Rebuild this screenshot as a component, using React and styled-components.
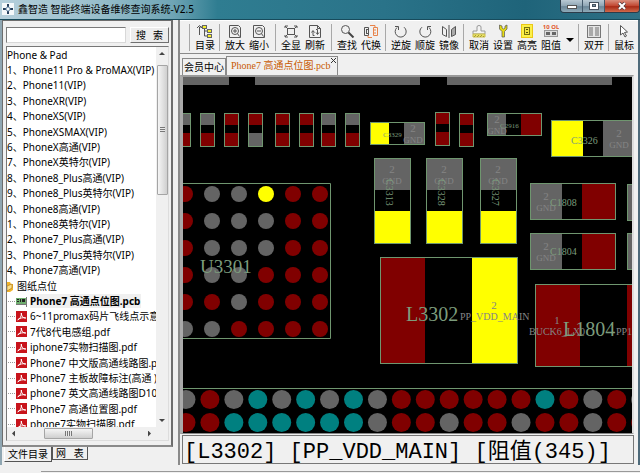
import { useState } from 'react'
import styled, { createGlobalStyle, css } from 'styled-components'

const GlobalStyle = createGlobalStyle`
  * {
    box-sizing: border-box;
  }

  body {
    margin: 0;
    font-family: 'Noto Sans', 'Noto Sans CJK SC', sans-serif;
    font-size: 10px;
    color: #000;
  }

  button,
  input {
    font: inherit;
    color: inherit;
    margin: 0;
    padding: 0;
  }
`

const MODELS = [
  '1、Phone11 Pro & ProMAX(VIP)',
  '2、Phone11(VIP)',
  '3、PhoneXR(VIP)',
  '4、PhoneXS(VIP)',
  '5、PhoneXSMAX(VIP)',
  '6、PhoneX高通(VIP)',
  '7、PhoneX英特尔(VIP)',
  '8、Phone8_Plus高通(VIP)',
  '9、Phone8_Plus英特尔(VIP)',
  '0、Phone8高通(VIP)',
  '1、Phone8英特尔(VIP)',
  '2、Phone7_Plus高通(VIP)',
  '3、Phone7_Plus英特尔(VIP)',
  '4、Phone7高通(VIP)'
]

const FILES = [
  'Phone7 高通点位图.pcb',
  '6~11promax码片飞线点示意图.pdf',
  '7代8代电感组.pdf',
  'iphone7实物扫描图.pdf',
  'Phone7 中文版高通线路图.pdf',
  'Phone7 主板故障标注(高通 ) .pdf',
  'phone7 英文高通线路图D10 (高通).pdf',
  'Phone7 高通位置图.pdf',
  'phone7实物扫描图.pdf'
]

/* ---------- icons ---------- */

const LINE = { fill: 'none', stroke: '#555', strokeWidth: 1 }

const ICONS = {
  目录: (
    <>
      <path d="M2.500 3v8M7.500 3v9M7.500 7h3M7.500 12h3M2.500 3h3" {...LINE} />
      <path d="M0 4l2.500-2.500L5 4" {...LINE} />
      <rect x="5.500" y="1.500" width="4" height="3" fill="#f5ee2a" stroke="#666" />
      <rect x="10.500" y="5.500" width="4" height="3" fill="#f5ee2a" stroke="#666" />
      <rect x="10.500" y="10.500" width="4" height="3" fill="#f5ee2a" stroke="#666" />
    </>
  ),
  放大: (
    <>
      <path d="M2.500 1.500h9l2 2v10h-11z" {...LINE} />
      <circle cx="8" cy="7" r="3.500" {...LINE} />
      <path d="M6 7h4M8 5v4M10.500 9.500l2 3" {...LINE} />
    </>
  ),
  缩小: (
    <>
      <path d="M2.500 1.500h9l2 2v10h-11z" {...LINE} />
      <circle cx="8" cy="7" r="3.500" {...LINE} />
      <path d="M6 7h4M10.500 9.500l2 3" {...LINE} />
    </>
  ),
  全显: (
    <>
      <rect x="4.500" y="4.500" width="7" height="6" {...LINE} />
      <path d="M2 4V2h3M11 2h3v2M14 11v2h-3M5 13H2v-2M2 2l3 3M14 2l-3 3M14 13l-3-3M2 13l3-3" {...LINE} />
    </>
  ),
  刷新: (
    <>
      <path d="M2.500 1.500h8l3 3v9h-11zM10.500 1.500v3h3" {...LINE} />
      <path d="M7.500 11.500H6V7M4.500 8.500L6 6.500l1.500 2M9 5.500h1.500V10M9 8.500l1.500 2 1.500-2" {...LINE} />
    </>
  ),
  查找: (
    <>
      <circle cx="6.500" cy="5.500" r="4" {...LINE} />
      <path d="M9.500 8.500l5 5" stroke="#444" strokeWidth="2" fill="none" />
    </>
  ),
  代换: (
    <>
      <path d="M1.500 3.500h4v8h-4zM3 5.500h2M3 9.500h2M3.500 5v5" {...LINE} />
      <path d="M10.500 3.500h4v8h-4zM11 6h2M11 9h2M7 1.500h5v2M9 13.500H5v-2" {...LINE} stroke="#e8834a" />
    </>
  ),
  逆旋: (
    <>
      <path d="M4 3.500A5.500 5.500 0 1 0 11 3.200" {...LINE} />
      <path d="M2 2.500h3.500V6" {...LINE} />
    </>
  ),
  顺旋: (
    <>
      <path d="M12 3.500A5.500 5.500 0 1 1 5 3.200" {...LINE} />
      <path d="M14 2.500h-3.500V6" {...LINE} />
    </>
  ),
  镜像: (
    <>
      <path d="M1.500 2.500l4 3v7l-4-2z" {...LINE} />
      <path d="M8 1v13" {...LINE} />
      <path d="M14.500 2.500l-4 3v7l4-2z" fill="#aaa" stroke="#555" />
    </>
  ),
  取消: (
    <>
      <path d="M6 7V3q0-1.500 2-1.500T10 3v4h4v3H2V7z" fill="#f4f4f4" stroke="#999" />
      <path d="M2 10h12v3H2z" fill="#e9e26b" stroke="#c9bd4a" />
      <path d="M3 13l2-2M6 13l2-2M9 13l2-2M12 13l1-1" stroke="#a89c30" fill="none" />
    </>
  ),
  设置: (
    <path
      d="M4.500 1v4L7 7.500V13h2.500V7.500L12 5V1l-2 1v2L8.500 5 7 4V2z"
      fill="#e8dc12"
      stroke="#555"
      strokeWidth="0.700"
    />
  ),
  高亮: (
    <>
      <rect x="2.500" y="0.500" width="11" height="13" fill="#fbf04a" stroke="#eac816" />
      <rect x="5.500" y="3.500" width="5" height="7" fill="#f3e53c" stroke="#77700f" />
      <path d="M7 5.500h2M7 8.500h2" stroke="#55500a" />
    </>
  ),
  阻值: (
    <>
      <text x="8" y="5" fontSize="6" fontWeight="700" textAnchor="middle" fill="#e2572b">10 OL</text>
      <rect x="1.500" y="6.500" width="13" height="6" fill="#ddd" stroke="#999" />
      <path d="M3 8h4v3H3zM9 8h4v3H9z" fill="#666" />
    </>
  ),
  双开: (
    <>
      <rect x="1.500" y="1.500" width="13" height="12" fill="#e4e4e4" stroke="#777" />
      <path d="M3 3h4v9H3zM9 3h4v9H9z" fill="#a9a9a9" />
    </>
  ),
  鼠标: <path d="M4.500 1.500v9.500l2.500-2 2 4 1.500-1-2-3.500 3-.5z" fill="#fff" stroke="#555" />
}

const TOOL_GROUPS = [
  { items: ['目录'] },
  { items: ['放大', '缩小'], wide: true },
  { items: ['全显', '刷新'], wide: true },
  { items: ['查找', '代换'] },
  { items: ['逆旋', '顺旋', '镜像'] },
  { items: ['取消', '设置', '高亮', '阻值'], more: true },
  { items: ['双开'] },
  { items: ['鼠标'] }
]

const PdfIcon = () => (
  <svg width="11" height="11" viewBox="0 0 11 11">
    <rect width="11" height="11" fill="#c8141c" />
    <path d="M1.500 9C4 8 5.800 5 5.300 2M5.300 2C5.300 5 7 7.300 9.800 7M2 8.500C4 7 7 6.300 9.800 7" fill="none" stroke="#fff" />
  </svg>
)

const PcbIcon = () => (
  <svg width="11" height="11" viewBox="0 0 11 11">
    <rect x="0" y="2" width="10" height="6" fill="#6fae6f" />
    <path d="M1 3h2v1H1zM1 5h2v1H1zM4 3h1v3H4zM6 3h3v3H6z" fill="#222" />
    <path d="M0 8.500h10M10.500 1v10" stroke="#777" />
  </svg>
)

const FolderIcon = () => (
  <svg width="7" height="12" viewBox="0 0 7 12">
    <path d="M0 2h3l1 2h2v6l-3 2H0z" fill="#f0b429" />
    <path d="M0 6l5-2v4l-5 3z" fill="#fbe08a" stroke="#a8701a" strokeWidth="0.600" />
  </svg>
)

/* ---------- board drawing ---------- */

const C = {
  r: '#800000',
  g: '#646464',
  t: '#008080',
  y: '#ffff00',
  line: '#6f966f',
  name: '#7c9c7c',
  net: '#858585'
}

const RESISTORS = [
  [-7, 36, 'gr'], [17, 36, 'gr'], [41, 36, 'rr'], [65, 36, 'rg'], [92, 36, 'rr'], [116, 36, 'rr'],
  [138, 36, 'gr'], [162, 36, 'gr'], [252, 35, 'rr'], [276, 36, 'rr']
]

// x, y, w, h, first pad size, gap, pad colours
const WIDE_PARTS = [
  [187, 45, 54, 22, 19, 15, 'yg'],
  [304, 36, 54, 22, 19, 15, 'gr'],
  [368, 43, 86, 36, 32, 20, 'yg'],
  [347, 106, 85, 36, 32, 20, 'gr'],
  [347, 156, 85, 36, 32, 20, 'gr'],
  [444, 107, 85, 36, 32, 20, 'gr'],
  [444, 156, 85, 36, 32, 20, 'gr'],
  [197, 180, 137, 106, 45, 47, 'ry'],
  [352, 207, 137, 82, 45, 47, 'rr']
]

const TALL_PARTS = [
  [191, 'C3313'],
  [243, 'C3328'],
  [297, 'C3327']
]

const GRID = ['rggyrr', 'rgggrr', 'rgggrr', 'rggrrr', 'rrgrrr', 'ggrrrr']
const STRIP = ['grgtgtgtgrrrrrrtrgrg', 'rrttttttgrrgrrgrrgrr']

const Ground = ({ x, y }) => (
  <>
    <Mark x={x} y={y} $size={11} $fill={C.net} textAnchor="middle">2</Mark>
    <Mark x={x} y={y + 11} $size={9} $fill={C.net} textAnchor="middle">GND</Mark>
  </>
)

function Board() {
  return (
    <Canvas role="img" aria-label="Phone7 高通点位图">
      <g fill={C.g}>
        <rect x="0" y="0" width="46" height="8" />
        <rect x="72" y="0" width="165" height="8" />
        <rect x="264" y="0" width="165" height="8" />
      </g>

      {RESISTORS.map(([x, y, pads]) => (
        <g key={x}>
          <rect x={x} y={y} width="15" height="12" fill={C[pads[0]]} />
          <rect x={x} y={y + 20} width="15" height="13" fill={C[pads[1]]} />
          <rect x={x + 0.5} y={y + 0.5} width="14" height="33" fill="none" stroke={C.line} />
        </g>
      ))}

      {WIDE_PARTS.map(([x, y, w, h, pad, gap, pads]) => (
        <g key={`${x}-${y}`}>
          <rect x={x} y={y} width={pad} height={h} fill={C[pads[0]]} />
          <rect x={x + pad + gap} y={y} width={w - pad - gap} height={h} fill={C[pads[1]]} />
          <rect x={x + 0.5} y={y + 0.5} width={w} height={h} fill="none" stroke={C.line} />
        </g>
      ))}

      {TALL_PARTS.map(([x, name]) => (
        <g key={name}>
          <rect x={x} y="81" width="36" height="32" fill={C.g} />
          <rect x={x} y="134" width="36" height="33" fill={C.y} />
          <rect x={x + 0.5} y="81.5" width="36" height="85" fill="none" stroke={C.line} />
          <Ground x={x + 18} y={96} />
          <Mark transform={`translate(${x + 12} 102) rotate(90)`} $size={10}>{name}</Mark>
        </g>
      ))}

      <path d="M0 106.500H147.500V261.500H0M0 311.500H3000" fill="none" stroke={C.line} />
      {GRID.map((row, j) =>
        [...row].map((c, i) => <circle key={`${i}-${j}`} cx={2 + i * 27} cy={117 + j * 27} r="8" fill={C[c]} />)
      )}
      {STRIP.map((row, j) =>
        [...row].map((c, i) => (
          <circle key={`${i}-${j}`} cx={3 + i * 23.93} cy={322.5 + j * 23} r="9.500" fill={C[c]} />
        ))
      )}

      <Ground x={230} y={55} />
      <Ground x={314} y={46} />
      <Ground x={436} y={60} />
      <Ground x={363} y={123} />
      <Ground x={363} y={173} />

      <Mark x="200" y="60" $size={7}>C3329</Mark>
      <Mark x="317" y="51" $size={7}>C2916</Mark>
      <Mark x="388" y="67" $size={10}>C3326</Mark>
      <Mark x="367" y="129" $size={10}>C1808</Mark>
      <Mark x="367" y="178" $size={10}>C1804</Mark>
      <Mark x="17" y="196" $size={19}>U3301</Mark>
      <Mark x="223" y="244" $size={20}>L3302</Mark>
      <Mark x="311" y="232" $size={11} $fill={C.net} textAnchor="middle">2</Mark>
      <Mark x="277" y="243" $size={10} $fill={C.net}>PP_VDD_MAIN</Mark>
      <Mark x="374" y="247" $size={11} $fill={C.net} textAnchor="middle">1</Mark>
      <Mark x="346" y="258" $size={10} $fill={C.net}>BUCK6_LX0</Mark>
      <Mark x="380" y="259" $size={20}>L1804</Mark>
      <Mark x="433" y="258" $size={10} $fill={C.net}>PP1</Mark>
    </Canvas>
  )
}

/* ---------- window ---------- */

export default function App() {
  const [keyword, setKeyword] = useState('')
  const [selected, setSelected] = useState(FILES[0])

  return (
    <Shell>
      <GlobalStyle />
      <TitleBar>
        <svg width="12" height="12" viewBox="0 0 12 12">
          <rect width="12" height="12" fill="#f4f8fa" />
          <path d="M6 1v3M6 8v3M1 6h3M8 6h3" stroke="#27415e" strokeWidth="2" />
          <circle cx="6" cy="6" r="2" fill="none" stroke="#6d8ba8" />
        </svg>
        <Title>鑫智造 智能终端设备维修查询系统-V2.5</Title>
        <Controls>
          <WinButton aria-label="最小化">
            <svg width="10" height="8"><rect x="0.500" y="3.500" width="9" height="3" fill="#fff" stroke="#555" /></svg>
          </WinButton>
          <WinButton aria-label="还原">
            <svg width="10" height="8">
              <rect x="0.500" y="0.500" width="9" height="7" fill="#fff" stroke="#46525e" />
              <rect x="3.500" y="2.500" width="3" height="2" fill="#7d95a4" stroke="#46525e" />
            </svg>
          </WinButton>
          <WinButton $close aria-label="关闭">
            <svg width="10" height="8">
              <path d="M2 1l6 6M8 1L2 7" stroke="#53383a" strokeWidth="3.500" />
              <path d="M2 1l6 6M8 1L2 7" stroke="#fff" strokeWidth="2" />
            </svg>
          </WinButton>
        </Controls>
      </TitleBar>

      <Body>
        <Sidebar>
          <SidebarFrame>
            <Search onSubmit={e => e.preventDefault()}>
              <SearchInput aria-label="搜索" value={keyword} onChange={e => setKeyword(e.target.value)} />
              <SearchButton type="submit">
                <span>搜</span>
                <span>索</span>
              </SearchButton>
            </Search>
            <TreeBox>
              <TreeView>
                <Tree>
                  <TreeRow>
                    <RowButton>Phone &amp; Pad</RowButton>
                  </TreeRow>
                  {MODELS.map(name => (
                    <TreeRow key={name}>
                      <RowButton>{name}</RowButton>
                    </TreeRow>
                  ))}
                  <TreeRow>
                    <FolderIcon />
                    <RowButton $indent>图纸点位</RowButton>
                  </TreeRow>
                  {FILES.map(name => (
                    <TreeRow key={name} $leaf>
                      {name.endsWith('.pcb') ? <PcbIcon /> : <PdfIcon />}
                      <RowButton $selected={selected === name} onClick={() => setSelected(name)}>
                        {name}
                      </RowButton>
                    </TreeRow>
                  ))}
                </Tree>
              </TreeView>
              <VScroll>
                <Arrow $dir="up" />
                <VThumb />
                <Arrow $dir="down" />
              </VScroll>
              <HScroll>
                <Arrow $dir="left" />
                <HThumb />
                <Arrow $dir="right" />
              </HScroll>
            </TreeBox>
          </SidebarFrame>
          <SideTabs>
            <SideTab $active>文件目录</SideTab>
            <SideTab>网&nbsp;&nbsp;&nbsp;表</SideTab>
          </SideTabs>
        </Sidebar>

        <Main>
          <Toolbar>
            {TOOL_GROUPS.map(group => (
              <ToolGroup key={group.items[0]} $wide={group.wide}>
                {group.items.map(label => (
                  <Tool key={label}>
                    <svg width="16" height="14" viewBox="0 0 16 14">{ICONS[label]}</svg>
                    {label}
                  </Tool>
                ))}
                {group.more && (
                  <More aria-label="更多">
                    <svg width="8" height="4"><path d="M0 0h8L4 4z" /></svg>
                  </More>
                )}
              </ToolGroup>
            ))}
          </Toolbar>

          <DocTabs>
            <DocTab>会员中心</DocTab>
            <DocTab $active>
              Phone7 高通点位图.pcb
              <svg width="5" height="5"><path d="M0 0l5 5M5 0L0 5" stroke="#333" /></svg>
            </DocTab>
          </DocTabs>

          <Viewport>
            <Board />
          </Viewport>
          <Status>
            [L3302] [PP_VDD_MAIN] [<span>阻值</span>(345)]
          </Status>
        </Main>
      </Body>
      <Footer />
    </Shell>
  )
}

const Shell = styled.div`
  height: 100vh;
  display: grid;
  grid-template-rows: 20px minmax(0, 1fr) 8px;
  background: #f0f0f0;
  overflow: hidden;
`

const TitleBar = styled.header`
  display: flex;
  align-items: flex-start;
  gap: 4px;
  padding: 3px 0 0 2px;
  border-bottom: 1px solid #174b5c;
  background: linear-gradient(90deg, #b5cfdb 0%, #9cc0cd 14%, #6fa5b5 27%, #2f7d91 34%, #2a7389 60%, #1f647a 82%, #2f7186 100%);

  & > svg {
    flex: none;
  }
`

const Title = styled.h1`
  flex: 1;
  margin: 0;
  font-size: 10px;
  line-height: 12px;
  font-weight: 400;
  white-space: nowrap;
`

const Controls = styled.div`
  display: flex;
  height: 13px;
  margin-top: -3px;
  border: 1px solid #2c3c4a;
  border-top: 0;
  border-radius: 0 0 4px 4px;
  overflow: hidden;
`

const WinButton = styled.button`
  display: flex;
  align-items: center;
  justify-content: center;
  width: ${p => (p.$close ? 34 : 22)}px;
  border: 0;
  border-right: ${p => (p.$close ? 0 : '1px solid #42586a')};
  background: ${p =>
    p.$close
      ? 'linear-gradient(#d98d7c, #c1452f 50%, #a92a16 55%, #cf6a4c)'
      : 'linear-gradient(#b9c9d3, #8ea5b4 50%, #6c8798 55%, #8fabb9)'};
`

const Body = styled.div`
  display: grid;
  grid-template-columns: 180px minmax(0, 1fr);
  min-height: 0;
`

const Sidebar = styled.aside`
  display: flex;
  flex-direction: column;
  min-height: 0;
  padding-right: 5px;
  border-left: 2px solid #8fa6b2;
  border-right: 2px solid #8a8a8a;
`

const SidebarFrame = styled.div`
  flex: 1;
  min-height: 0;
  display: flex;
  flex-direction: column;
  gap: 3px;
  padding: 6px 2px 4px 3px;
  border: 1px solid #6d6d6d;
  border-right: 2px solid #6d6d6d;
  border-bottom: 2px solid #8a8a8a;
`

const Search = styled.form`
  display: flex;
  gap: 4px;
  height: 16px;
`

const SearchInput = styled.input`
  flex: 1;
  min-width: 0;
  border: 1px solid #7a7a7a;
  border-right-color: #d8d8d8;
  border-bottom-color: #d8d8d8;
  background: #fff;
  outline: none;
`

const SearchButton = styled.button`
  display: flex;
  align-items: center;
  justify-content: space-between;
  width: 39px;
  padding: 0 5px;
  border: 1px solid #fff;
  border-right-color: #707070;
  border-bottom-color: #707070;
  background: #ececec;
  line-height: 12px;
`

const TreeBox = styled.div`
  flex: 1;
  min-height: 0;
  display: grid;
  grid-template: minmax(0, 1fr) 13px / minmax(0, 1fr) 12px;
  border: 1px solid #777;
  border-right-color: #ddd;
  border-bottom-color: #ddd;
  background: #f0f0f0;
`

const TreeView = styled.div`
  background: #fff;
  overflow: hidden;
`

const Tree = styled.ul`
  display: grid;
  grid-auto-rows: minmax(0, 1fr);
  height: calc(100% + 5px);
  margin: 0;
  padding: 0;
  list-style: none;
`

const TreeRow = styled.li`
  display: flex;
  align-items: center;
  min-width: 0;

  svg {
    flex: none;
  }

  ${p =>
    p.$leaf &&
    css`
      &::before {
        content: '';
        flex: none;
        width: 7px;
        margin: 0 1px;
        border-top: 1px dotted #999;
      }

      svg {
        margin-right: 3px;
      }
    `}
`

const RowButton = styled.button`
  padding: 0 1px 0 ${p => (p.$indent ? 3 : 0)}px;
  border: 0;
  background: ${p => (p.$selected ? '#f0f0f0' : 'transparent')};
  font-weight: ${p => (p.$selected ? 700 : 400)};
  line-height: 14px;
  white-space: nowrap;
`

const VScroll = styled.div`
  display: flex;
  flex-direction: column;
  align-items: center;
  justify-content: space-between;
  padding: 5px 0;
`

const VThumb = styled.div`
  width: 11px;
  height: 35%;
  margin-bottom: auto;
  margin-top: 10px;
  border: 1px solid #a5a5a5;
  border-radius: 1px;
  background: repeating-linear-gradient(#777 0 1px, #e8e8e8 1px 2px) center / 5px 5px no-repeat,
    linear-gradient(90deg, #f5f5f5, #cfcfcf);
`

const HScroll = styled.div`
  display: flex;
  align-items: center;
  padding: 0 5px;
`

const HThumb = styled.div`
  width: 49px;
  height: 11px;
  margin-left: 29px;
  margin-right: auto;
  border: 1px solid #a5a5a5;
  border-radius: 1px;
  background: repeating-linear-gradient(90deg, #777 0 1px, #e8e8e8 1px 2px) center / 7px 5px no-repeat,
    linear-gradient(#f5f5f5, #cfcfcf);
`

const ARROWS = {
  up: '50% 0, 100% 100%, 0 100%',
  down: '0 0, 100% 0, 50% 100%',
  left: '0 50%, 100% 0, 100% 100%',
  right: '0 0, 100% 50%, 0 100%'
}

const Arrow = styled.i`
  width: ${p => (p.$dir === 'up' || p.$dir === 'down' ? 6 : 3)}px;
  height: ${p => (p.$dir === 'up' || p.$dir === 'down' ? 3 : 6)}px;
  background: #444;
  clip-path: polygon(${p => ARROWS[p.$dir]});
`

const SideTabs = styled.div`
  display: flex;
  align-items: flex-start;
  height: 18px;
  padding-left: 2px;
`

const SideTab = styled.button`
  height: ${p => (p.$active ? 15 : 13)}px;
  padding: 0 3px;
  border: 1px solid #555;
  border-top: 0;
  border-left-color: ${p => (p.$active ? '#fff' : '#555')};
  background: #f0f0f0;
  line-height: 12px;
`

const Main = styled.main`
  display: flex;
  flex-direction: column;
  min-width: 0;
  min-height: 0;
  border-right: 2px solid #4e6a7a;
`

const Toolbar = styled.div`
  display: flex;
  height: 34px;
  padding: 3px 0 2px 9px;
  border-top: 1px solid #fff;
  border-bottom: 1px solid #8a8a8a;
`

const ToolGroup = styled.div`
  display: flex;
  flex: none;
  padding: 0 ${p => (p.$wide ? 4 : 2)}px 0 3px;
  border-left: 1px solid #a8a8a8;
`

const Tool = styled.button`
  display: flex;
  flex-direction: column;
  align-items: center;
  width: 24px;
  border: 0;
  background: none;
  line-height: 14px;
  white-space: nowrap;

  svg {
    flex: none;
  }
`

const More = styled.button`
  width: 13px;
  border: 0;
  background: none;
`

const DocTabs = styled.div`
  display: flex;
  align-items: flex-end;
  height: 21px;
  padding-left: 2px;
`

const DocTab = styled.button`
  display: flex;
  gap: 1px;
  height: ${p => (p.$active ? 19 : 17)}px;
  padding: ${p => (p.$active ? '1px 1px 0 4px' : '0 1px')};
  border: 1px solid #8a8a8a;
  border-bottom: 0;
  background: #f0f0f0;
  color: ${p => (p.$active ? '#c85a00' : '#000')};
  font-family: ${p => (p.$active ? "'Liberation Serif', 'Noto Sans CJK SC', serif" : 'inherit')};
  line-height: 16px;
  white-space: nowrap;
`

const Viewport = styled.div`
  flex: 1;
  min-height: 0;
  margin: 0 4px 0 0;
  border: solid;
  border-width: 2px 2px 1px 3px;
  border-color: #999 #ddd #888 #aaa;
  background: #000;
`

const Canvas = styled.svg`
  display: block;
  width: 100%;
  height: 100%;
`

const Mark = styled.text`
  font-family: 'Liberation Serif', serif;
  font-size: ${p => p.$size}px;
  fill: ${p => p.$fill || C.name};
`

const Status = styled.output`
  height: 29px;
  margin: 1px 4px 1px 2px;
  padding-left: 1px;
  border: 1px solid #777;
  background: #f0f0f0;
  font-family: 'Liberation Mono', 'Noto Sans CJK SC', monospace;
  font-size: 22px;
  line-height: 26px;
  white-space: nowrap;
  overflow: hidden;

  span {
    font-family: 'Noto Sans CJK SC', sans-serif;
    font-size: 22px;
    line-height: 24px;
  }
`

const Footer = styled.footer`
  margin-left: 41px;
  margin-top: 6px;
  border-top: 1px solid #999;
`
